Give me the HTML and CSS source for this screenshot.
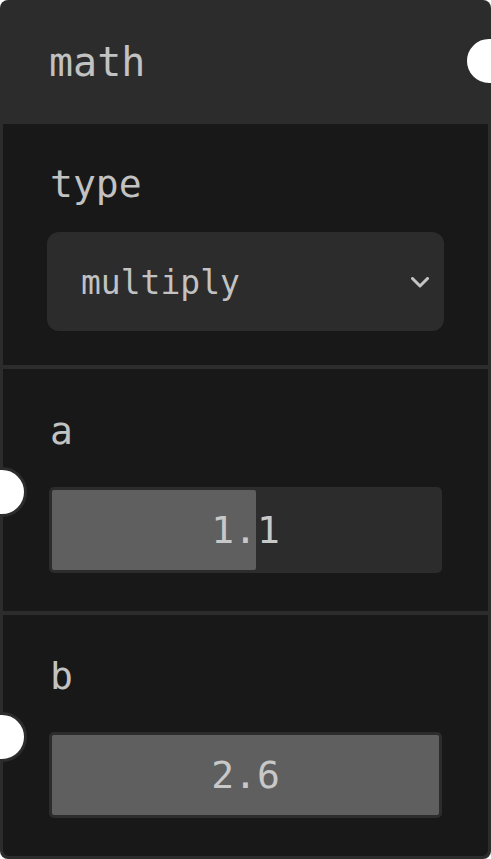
FILE: index.html
```html
<!DOCTYPE html>
<html lang="en">
<head>
<meta charset="utf-8">
<title>math node</title>
<link rel="stylesheet" href="styles.css">
</head>
<body>
<div class="node">
  <div class="header">
    <span class="title">math</span>
    <span class="port port-out"></span>
  </div>
  <div class="section section-select">
    <span class="label">type</span>
    <div class="select">
      <span class="select-value">multiply</span>
      <svg class="chevron" width="18" height="11" viewBox="0 0 18 11" aria-hidden="true">
        <polyline points="1.5,1.5 9,9 16.5,1.5" fill="none" stroke="#c4c4c4" stroke-width="3" stroke-linecap="round" stroke-linejoin="round"/>
      </svg>
    </div>
  </div>
  <div class="section section-num">
    <span class="port port-in"></span>
    <span class="label">a</span>
    <div class="slider">
      <div class="slider-fill" style="width: 52.6%"></div>
      <span class="slider-value">1.1</span>
    </div>
  </div>
  <div class="section section-num">
    <span class="port port-in"></span>
    <span class="label">b</span>
    <div class="slider">
      <div class="slider-fill" style="width: 100%"></div>
      <span class="slider-value">2.6</span>
    </div>
  </div>
</div>
</body>
</html>
```

FILE: styles.css
```css
html, body {
  margin: 0;
  padding: 0;
  background: #ffffff;
  overflow: hidden;
}

body {
  font-family: "DejaVu Sans Mono", "Liberation Mono", monospace;
  color: #c2c2c2;
}

.node {
  width: 491px;
  height: 859px;
  box-sizing: border-box;
  background: #2c2c2c;
  border-radius: 8px;
  padding: 0 3px 3px 3px;
  display: flex;
  flex-direction: column;
  gap: 4px;
}

.header {
  position: relative;
  height: 124px;
  flex: none;
  margin: 0 -3px -4px -3px;
  padding-left: 49px;
  display: flex;
  align-items: center;
}

.title {
  font-size: 40px;
  line-height: 46px;
  margin-top: -1px;
}

.port {
  position: absolute;
  width: 44px;
  height: 44px;
  border-radius: 50%;
  background: #ffffff;
  border: 3px solid #2c2c2c;
}

.port-out {
  right: -23px;
  top: 36px;
}

.port-in {
  left: -26px;
  top: calc(50% - 23px);
}

.section {
  position: relative;
  flex: 1;
  background: #181818;
  padding: 0 46px;
  display: flex;
  flex-direction: column;
  justify-content: center;
}

.section:last-child {
  border-radius: 0 0 6px 6px;
}

.label {
  font-size: 38px;
  line-height: 44px;
  margin-left: 1px;
}

.section-select .label {
  margin-top: 3px;
  margin-bottom: 26px;
}

.section-num .label {
  margin-bottom: 34px;
  margin-top: 2px;
}

.select {
  height: 99px;
  margin: 0 -2px;
  background: #2c2c2c;
  border-radius: 12px;
  padding: 0 15px 0 34px;
  display: flex;
  align-items: center;
  justify-content: space-between;
}

.select-value {
  font-size: 33px;
  line-height: 38px;
  margin-top: 3px;
}

.chevron {
  display: block;
  margin-top: 2px;
}

.slider {
  position: relative;
  height: 86px;
  box-sizing: border-box;
  background: #2c2c2c;
  border: 3px solid #2c2c2c;
  border-radius: 5px;
  display: flex;
  align-items: center;
  justify-content: center;
}

.slider-fill {
  position: absolute;
  left: 0;
  top: 0;
  bottom: 0;
  background: #5f5f5f;
  border-radius: 2px;
}

.slider-value {
  position: relative;
  font-size: 38px;
  line-height: 44px;
  color: #c8c8c8;
}
```
